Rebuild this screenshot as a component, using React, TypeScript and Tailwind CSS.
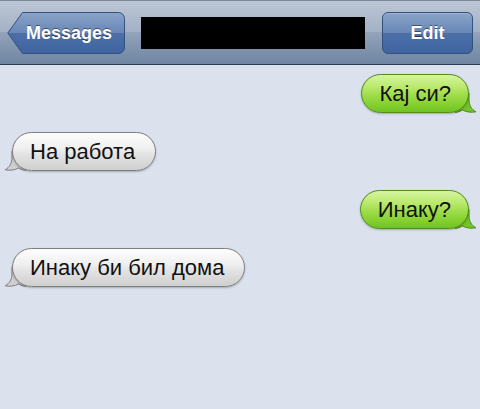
const font = "font-['Liberation_Sans',Arial,sans-serif]";

function BackButton() {
  return (
    <div className="relative w-[118px] h-[42px] flex items-center pl-[19px]">
      <svg className="absolute inset-0" width="118" height="42" viewBox="0 0 118 42">
        <defs>
          <linearGradient id="bb" x1="0" y1="0" x2="0" y2="1">
            <stop offset="0" stopColor="#8aa3c9" />
            <stop offset="0.5" stopColor="#6887b7" />
            <stop offset="0.5" stopColor="#4c6fa7" />
            <stop offset="1" stopColor="#3f64a0" />
          </linearGradient>
        </defs>
        <path
          d="M15.5 0.5 H111.5 a6 6 0 0 1 6 6 V35.5 a6 6 0 0 1 -6 6 H15.5 L0.8 21 Z"
          fill="url(#bb)"
          stroke="#34507c"
        />
      </svg>
      <span className="relative text-white font-bold text-[18px] leading-none [text-shadow:0_-1px_0_rgba(0,0,0,0.45)]">
        Messages
      </span>
    </div>
  );
}

function Bubble({text, mine}: {text: string; mine?: boolean}) {
  return (
    <div className={`relative isolate ${mine ? "self-end mr-[11px]" : "self-start ml-[12px]"}`}>
      <svg
        className={`absolute bottom-0 -z-10 ${mine ? "right-[-8px]" : "left-[-8px] -scale-x-100"}`}
        width="28"
        height="22"
        viewBox="0 0 28 22"
      >
        <path
          d="M6 2 H20 V8 C20 14.5 22.5 18.5 27 20.8 C22 21.8 17 21 13.5 19 C11 20.5 8.5 21.3 6 21.3 Z"
          fill={mine ? "#73c527" : "#cfcfcf"}
          stroke={mine ? "#4e8c1c" : "#7f7f7f"}
        />
      </svg>
      {mine ? (
        <div className="h-[39px] flex items-center rounded-full border border-[#4e8c1c] pl-[17px] pr-[17px] shadow-[0_1px_2px_rgba(0,0,0,0.25)] bg-[linear-gradient(to_bottom,#d6f5a0_0%,#b7e868_35%,#9edc4a_55%,#84d030_80%,#70c325_100%)]">
          <span className="text-[22px] leading-none text-[#111]">{text}</span>
        </div>
      ) : (
        <div className="h-[39px] flex items-center rounded-full border border-[#7f7f7f] pl-[17px] pr-[20px] shadow-[0_1px_2px_rgba(0,0,0,0.25)] bg-[linear-gradient(to_bottom,#fdfdfd_0%,#f0f0f0_40%,#e2e2e2_60%,#cfcfcf_100%)]">
          <span className="text-[22px] leading-none text-[#111]">{text}</span>
        </div>
      )}
    </div>
  );
}

export default function App() {
  return (
    <div className={`w-[480px] h-[409px] bg-[#dbe2ed] overflow-hidden ${font}`}>
      <div className="h-[65px] flex items-center px-[7px] border-t border-t-[#7d8899] border-b border-b-[#2e3b4f] bg-[linear-gradient(to_bottom,#bcc6d5_0%,#a3b1c5_50%,#93a3ba_50%,#6f85a3_100%)]">
        <BackButton />
        <div className="w-[224px] h-[32px] bg-black ml-[16px]" />
        <div className="ml-[17px] w-[91px] h-[42px] rounded-[6px] border border-[#34507c] flex items-center justify-center bg-[linear-gradient(to_bottom,#8aa3c9_0%,#6887b7_50%,#4c6fa7_50%,#3f64a0_100%)] shadow-[inset_0_1px_0_rgba(255,255,255,0.2)]">
          <span className="text-white font-bold text-[18px] leading-none [text-shadow:0_-1px_0_rgba(0,0,0,0.45)]">
            Edit
          </span>
        </div>
      </div>
      <div className="flex flex-col pt-[9px] gap-[19px]">
        <Bubble text="Кај си?" mine />
        <Bubble text="На работа" />
        <Bubble text="Инаку?" mine />
        <Bubble text="Инаку би бил дома" />
      </div>
    </div>
  );
}
